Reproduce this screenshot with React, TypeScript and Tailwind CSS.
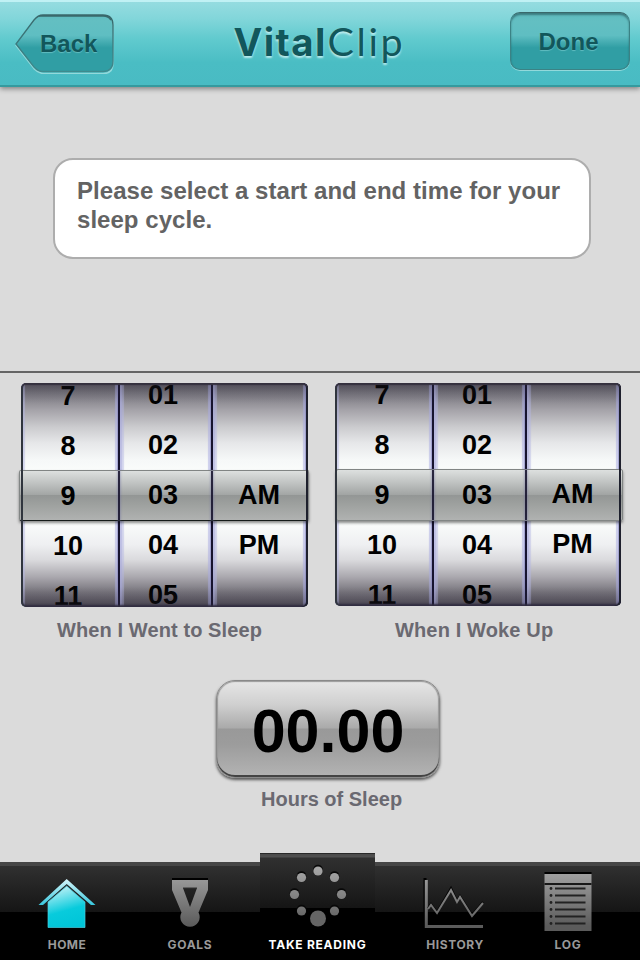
import React from "react";

const hours = ["7", "8", "9", "10", "11"];
const minutes = ["01", "02", "03", "04", "05"];
const meridiem = ["", "", "AM", "PM", ""];

function Column({ items, className, textClass }: { items: string[]; className: string; textClass: string }) {
  return (
    <div
      className={`h-full shrink-0 border-r-2 border-[#17142f] shadow-[inset_4px_0_1px_rgba(180,182,228,0.5),inset_2px_0_1px_rgba(150,150,210,0.45),inset_-3px_0_1px_rgba(170,172,225,0.55),inset_-1px_0_0_rgba(80,75,140,0.5)] last:border-r-0 ${className}`}
    >
      <div className={`relative z-20 flex flex-col ${textClass}`}>
        {items.map((item, i) => (
          <span key={i} className="flex h-[50px] items-center justify-center text-[27px] font-bold leading-[20px] text-black">
            {item}
          </span>
        ))}
      </div>
    </div>
  );
}

function Picker({ second = false }: { second?: boolean }) {
  return (
    <div className={`relative ${second ? "h-[223px] w-[286px]" : "h-[224px] w-[287px]"}`}>
      <div className="relative flex h-full w-full overflow-hidden rounded-[5px] bg-[linear-gradient(to_bottom,#55525c_0px,#77757d_10px,#a5a3a9_27px,#cbcbce_44px,#e6e7e9_60px,#f6f8f8_77px,#fafcfb_88px,#fafcfb_140px,#eeeff1_162px,#dadadd_177px,#aaa8ae_194px,#77747c_209px,#4c4853_224px)]">
        <Column items={hours} className="w-[99px]" textClass={second ? "mt-[-13px] ml-[-3px]" : "mt-[-12px] ml-[-3px]"} />
        <Column items={minutes} className="w-[93px]" textClass={second ? "mt-[-13px] ml-[-5px]" : "mt-[-13px] ml-[-5px]"} />
        <Column items={meridiem} className={second ? "w-[94px]" : "w-[95px]"} textClass={second ? "mt-[-14px] ml-[-1px]" : "mt-[-13px] ml-[-1px]"} />
        <div className="pointer-events-none absolute inset-0 z-30 rounded-[5px] bg-[linear-gradient(to_bottom,rgba(55,50,65,0.25)_0px,rgba(55,50,65,0)_20px,rgba(55,50,65,0)_204px,rgba(55,50,65,0.25)_224px)] shadow-[inset_0_2px_1px_#35313f,inset_2px_0_0_#30363e,inset_-2px_0_0_#1d202c,inset_0_-2px_2px_#302c40]" />
      </div>
      <div
        className={`pointer-events-none absolute z-10 rounded-[2px] border border-[#818584] bg-[linear-gradient(to_bottom,#dde0df_0%,#bdc0bf_27%,#a2a5a4_49%,#939695_50%,#9ea19f_69%,#b0b2b1_100%)] shadow-[0_2px_3px_rgba(0,0,0,0.45)] ${
          second ? "left-px top-[86px] h-[52px] w-[287px]" : "-left-[2px] top-[87px] h-[51px] w-[290px] border-b-[#151b19]"
        }`}
      >
        <div className={`absolute bottom-0 top-0 w-[2px] bg-[#17142f] opacity-90 shadow-[0_0_2px_1px_rgba(110,110,165,0.4)] ${second ? "left-[95px]" : "left-[98px]"}`} />
        <div className={`absolute bottom-0 top-0 w-[2px] bg-[#17142f] opacity-90 shadow-[0_0_2px_1px_rgba(110,110,165,0.4)] ${second ? "left-[188px]" : "left-[191px]"}`} />
      </div>
    </div>
  );
}

const Label = ({ children, className }: { children: React.ReactNode; className: string }) => (
  <span className={`whitespace-nowrap text-[20px] font-bold leading-[24px] text-[#6a6971] ${className}`}>{children}</span>
);

function Tab({ label, className, labelClass, children }: { label: string; className: string; labelClass: string; children: React.ReactNode }) {
  return (
    <div className={`flex h-[98px] flex-col items-center ${className}`}>
      <svg width="64" height="68" viewBox="0 0 64 68" className="mt-[2px] shrink-0">
        {children}
      </svg>
      <span className={`mt-[5px] whitespace-nowrap font-['Inter',sans-serif] text-[12px] font-bold leading-[15px] text-[#999999] ${labelClass}`}>
        {label}
      </span>
    </div>
  );
}

const dots = [
  [32, 7],
  [48.5, 13.5],
  [55.5, 30.5],
  [48.5, 47],
  [15.5, 47],
  [8.5, 30.5],
  [15.5, 13.5],
];

export default function App() {
  return (
    <div className="flex h-[960px] w-[640px] flex-col overflow-hidden bg-[#dbdbdb] font-['Liberation_Sans',Arial,sans-serif]">
      <svg width="0" height="0" className="absolute">
        <defs>
          <linearGradient id="metal" gradientUnits="userSpaceOnUse" x1="0" y1="5" x2="0" y2="62">
            <stop stopColor="#a6a6a6" />
            <stop offset="1" stopColor="#5b5b5b" />
          </linearGradient>
          <linearGradient id="house" x1="0.3" y1="0" x2="0.55" y2="1">
            <stop stopColor="#c5f2f7" />
            <stop offset="0.6" stopColor="#08cbdc" />
            <stop offset="1" stopColor="#00c5d8" />
          </linearGradient>
          <linearGradient id="roof" x1="0" y1="0" x2="0" y2="1">
            <stop stopColor="#d6f5fa" />
            <stop offset="1" stopColor="#38c7dd" />
          </linearGradient>
          <linearGradient id="backFill" x1="0" y1="0" x2="0" y2="1">
            <stop stopColor="#5dbabd" />
            <stop offset="0.1" stopColor="#63bfc2" />
            <stop offset="0.36" stopColor="#5fbec2" />
            <stop offset="0.58" stopColor="#309ea4" />
            <stop offset="1" stopColor="#309ea4" />
          </linearGradient>
          <linearGradient id="backLine" x1="0" y1="0" x2="0" y2="1">
            <stop stopColor="#39686b" />
            <stop offset="1" stopColor="#3e8a8d" />
          </linearGradient>
        </defs>
      </svg>

      <header className="relative z-10 flex h-[87px] shrink-0 items-start justify-between border-b-2 border-t-2 border-b-[#359a9e] border-t-[#c0f1f4] bg-[linear-gradient(to_bottom,#95dce0_0%,#82d6da_20%,#60cace_45%,#4abdc4_73%,#49bbc3_100%)] pl-[15px] pr-[10px] shadow-[0_2px_5px_rgba(0,0,0,0.4)]">
        <div className="relative mt-[12px] h-[60px] w-[99px]">
          <svg width="99" height="60" viewBox="0 0 99 60" className="absolute inset-0">
            <path d="M1 31 L19 7 Q24 1 29 1 H88 Q98 1 98 11 V49 Q98 59 88 59 H29 Q24 59 19 54 Z" fill="none" stroke="#92d9db" strokeWidth="1.5" transform="translate(0 .6)" />
            <path d="M1 30 L19 6 Q23 1 28 1 H88 Q98 1 98 11 V47 Q98 57.500 88 57.500 H28 Q23 57.500 19 53 Z" fill="url(#backFill)" stroke="url(#backLine)" strokeWidth="1.3" />
            <path d="M24 1.800 H88 Q94 1.800 96 6" fill="none" stroke="#39686b" strokeWidth="1.8" />
          </svg>
          <span className="relative ml-[25px] mt-[16px] block text-[24px] font-bold leading-[28px] text-[#12575b] [text-shadow:0_1px_1px_rgba(145,220,222,0.5)]">Back</span>
        </div>
        <h1 className="ml-[13px] mt-[15px] flex items-baseline whitespace-nowrap leading-[48px] text-[#12575b] [text-shadow:0_2px_2px_rgba(210,245,246,0.8)]">
          <span className="w-[94px] font-['Inter',sans-serif] text-[38.500px] font-bold tracking-[1.4px]">Vital</span>
          <span className="w-[76px] font-['Lato',sans-serif] text-[39.500px] font-normal tracking-[2.6px]">Clip</span>
        </h1>
        <div className="mt-[10px] flex h-[58px] w-[120px] items-center justify-center rounded-[10px] border border-[#3b8285] border-t-[#39686b] bg-[linear-gradient(to_bottom,#5dbabd_0%,#63bfc2_15%,#5fbec2_40%,#309ea4_62%,#309ea4_100%)] shadow-[0_1px_0_#92d9db,inset_0_2px_2px_rgba(30,70,75,0.55)]">
          <span className="mr-[3px] mt-[2px] text-[24px] font-bold leading-[28px] text-[#12575b] [text-shadow:0_1px_1px_rgba(145,220,222,0.5)]">Done</span>
        </div>
      </header>

      <section className="flex h-[284px] shrink-0 items-start pl-[53px] pt-[71px]">
        <div className="h-[101px] w-[538px] rounded-[20px] border-2 border-[#adadad] bg-white px-[22px] pt-[16px]">
          <p className="whitespace-nowrap text-[24px] font-bold leading-[29px] tracking-[0.04px] text-[#636363]">
            Please select a start and end time for your<br />sleep cycle.
          </p>
        </div>
      </section>

      <section className="flex h-[309px] shrink-0 items-start gap-[27px] border-t-2 border-[#656565] pl-[21px] pt-[10px]">
        <div className="flex w-[287px] flex-col">
          <Picker />
          <Label className="ml-[36px] mt-[11px] tracking-[0.1px]">When I Went to Sleep</Label>
        </div>
        <div className="flex w-[287px] flex-col">
          <Picker second />
          <Label className="ml-[60px] mt-[12px] tracking-[0.14px]">When I Woke Up</Label>
        </div>
      </section>

      <section className="flex h-[173px] shrink-0 flex-col items-start">
        <div className="ml-[216px] flex h-[98px] w-[224px] items-center justify-center rounded-[19px] border border-[#898989] bg-[linear-gradient(to_bottom,#e6e6e6_0%,#cfcfcf_25%,#aaaaaa_49%,#999999_50%,#9c9c9c_66%,#b4b4b4_100%)] shadow-[0_2px_3px_rgba(0,0,0,0.6),inset_0_-2px_0_#444,inset_0_0_1px_1px_#999]">
          <span className="mt-[5px] text-[61px] font-bold leading-none text-black">00.00</span>
        </div>
        <Label className="ml-[261px] mt-[9px]">Hours of Sleep</Label>
      </section>

      <nav className="flex h-[107px] shrink-0 items-end bg-[linear-gradient(to_bottom,#dbdbdb_9px,#464646_9px,#464646_13px,#303030_13px,#151515_59px,#000_59px)]">
        <Tab label="HOME" className="w-[134px]" labelClass="tracking-[0.4px]">
          <path d="M3.500 41 L31.700 15 L60.500 41 H56 L31.700 20 L8 41 Z" fill="url(#roof)" />
          <path d="M13 38 L31.700 22 L50 38 V63.500 H13 Z" fill="url(#house)" stroke="#48ccde" strokeWidth="0.7" />
        </Tab>
        <Tab label="GOALS" className="w-[112px]" labelClass="tracking-[0.7px]">
          <path d="M14 14 H50 V16 H14Z" fill="#000" />
          <path fillRule="evenodd" d="M14 16 H50 V26 L40.500 48.500 A9.700 9.700 0 1 1 23.500 48.500 L14 26 Z M25 24 L32 43 L39 24 Z" fill="url(#metal)" />
          <path d="M25 24 H39" stroke="#333" />
        </Tab>
        <div className="ml-[14px] flex h-[107px] w-[115px] flex-col items-center border-t border-[#292929] bg-[linear-gradient(to_bottom,#4a4a4a_0px,#505050_3px,#303030_4px,#151515_54px,#000_54px)]">
          <svg width="64" height="66" viewBox="0 0 64 66" className="mt-[10px] shrink-0">
            {dots.map(([x, y], i) => (
              <g key={i}>
                <circle cx={x} cy={y - 1.5} r="4.800" fill="#080808" />
                <circle cx={x} cy={y} r="4.600" fill="url(#metal)" />
              </g>
            ))}
            <circle cx="32" cy="54.500" r="8" fill="#656565" />
          </svg>
          <span className="mt-[7px] whitespace-nowrap font-['Inter',sans-serif] text-[12px] font-bold leading-[15px] tracking-[0.75px] text-white">TAKE READING</span>
        </div>
        <Tab label="HISTORY" className="ml-[13px] w-[134px]" labelClass="tracking-[0.6px]">
          <path d="M2 14 V62 H59" fill="none" stroke="#000" strokeWidth="3" />
          <path d="M3.300 16 V62.500 H60" fill="none" stroke="url(#metal)" strokeWidth="3" />
          <path d="M5 44 L8 40 L14 48 L28 24 L34 37 L37 32 L49 51 L60 38" fill="none" stroke="#050505" strokeWidth="2" />
          <path d="M5 45 L8 41 L14 49 L28 26 L34 38 L37 33 L49 52 L60 39" fill="none" stroke="url(#metal)" strokeWidth="2" />
        </Tab>
        <Tab label="LOG" className="w-[92px]" labelClass="tracking-[0.8px]">
          <path d="M8.500 8 H55.500 V10 H8.500Z" fill="#000" />
          <path d="M8.500 10 H55.500 V67 H8.500Z" fill="url(#metal)" />
          <path d="M8.500 20 H55.500" stroke="#181818" strokeWidth="2" />
          {[24.5, 31.5, 38.5, 45.5, 52.5, 59.5].map((y) => (
            <g key={y}>
              <circle cx="15" cy={y} r="1.400" fill="#222" />
              <path d={`M19 ${y} H49.500`} stroke="#222" strokeWidth="2" />
            </g>
          ))}
        </Tab>
      </nav>
    </div>
  );
}
